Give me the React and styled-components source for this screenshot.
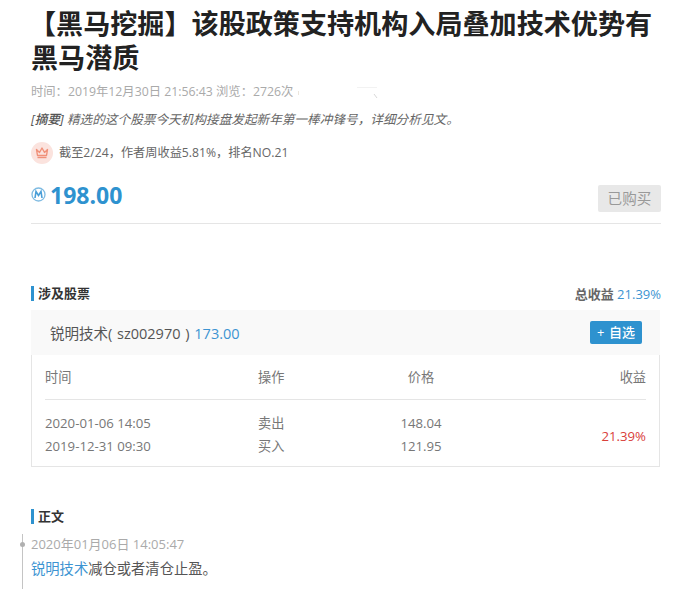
import styled, { createGlobalStyle } from "styled-components";

const GlobalStyle = createGlobalStyle`
  html, body {
    margin: 0;
    padding: 0;
    background: #fff;
    overflow: hidden;
  }
  body {
    font-family: "Open Sans", "Noto Sans CJK SC", sans-serif;
    color: #555;
  }
`;

const Page = styled.div`
  width: 630px;
  height: 589px;
  padding-left: 31px;
  overflow: hidden;
`;

const Title = styled.h1`
  margin: 0;
  padding-top: 7px;
  font-size: 27.1px;
  line-height: 34px;
  font-weight: 700;
  color: #222;
  text-indent: -2px;
`;

const Meta = styled.div`
  display: flex;
  align-items: center;
  margin-top: 7px;
  font-size: 12.3px;
  line-height: 20px;
  color: #aaa;
  white-space: pre;
  svg {
    margin-left: 2px;
  }
`;

const Summary = styled.p`
  margin: 7px 0 0;
  font-size: 12.65px;
  line-height: 20px;
  font-style: italic;
  color: #666;
  b {
    font-weight: 500;
    color: #555;
  }
`;

const RankRow = styled.div`
  display: flex;
  align-items: center;
  gap: 6px;
  margin-top: 13px;
  font-size: 12.2px;
  line-height: 22px;
  color: #666;
`;

const RankBadge = styled.span`
  display: flex;
  align-items: center;
  justify-content: center;
  width: 22px;
  height: 22px;
  border-radius: 50%;
  background: #fbe3de;
`;

const PriceRow = styled.div`
  display: flex;
  align-items: center;
  justify-content: space-between;
  margin-top: 21px;
  padding-bottom: 11px;
  height: 27px;
  border-bottom: 1px solid #e5e5e5;
`;

const Price = styled.div`
  display: flex;
  align-items: center;
  gap: 4px;
  margin-top: -8px;
  font-size: 23px;
  font-weight: 700;
  color: #2e92cf;
`;

const BoughtButton = styled.span`
  width: 63px;
  height: 27px;
  border-radius: 2px;
  background: #e8e8e8;
  color: #999;
  font-size: 14.6px;
  line-height: 27px;
  text-align: center;
`;

const SectionHead = styled.div`
  display: flex;
  align-items: center;
  justify-content: space-between;
  height: 16px;
  margin-top: ${(p) => p.$top}px;
`;

const SectionTitle = styled.div`
  border-left: 3px solid #2e92cf;
  padding-left: 4px;
  font-size: 13px;
  line-height: 15px;
  font-weight: 700;
  color: #333;
`;

const TotalGain = styled.div`
  font-size: 13px;
  color: #666;
  b {
    font-weight: 700;
  }
  span {
    color: #3d94d2;
  }
`;

const StockBar = styled.div`
  display: flex;
  align-items: center;
  justify-content: space-between;
  width: 629px;
  height: 45px;
  margin-top: 9px;
  padding: 0 18px 0 19px;
  box-sizing: border-box;
  background: #f9f9f9;
  font-size: 14.5px;
  word-spacing: 1px;
  color: #555;
`;

const StockPrice = styled.span`
  color: #3d94d2;
`;

const AddButton = styled.span`
  width: 52px;
  height: 23px;
  border-radius: 2px;
  background: #2e92cf;
  color: #fff;
  font-size: 13px;
  font-weight: 500;
  line-height: 23px;
  text-align: center;
`;

const TradeBox = styled.div`
  width: 629px;
  height: 112px;
  padding: 0 13px;
  box-sizing: border-box;
  border: 1px solid #e5e5e5;
  border-top: 0;
`;

const TradeGrid = styled.div`
  display: grid;
  grid-template-columns: 213px 100px 126px 1fr;
  font-size: 13.2px;
  line-height: 23px;
  color: #777;
`;

const HeadCell = styled.div`
  height: 44px;
  line-height: 44px;
  border-bottom: 1px solid #e5e5e5;
  margin-bottom: 12px;
  text-align: ${(p) => p.$align || "left"};
`;

const Cell = styled.div`
  text-align: ${(p) => p.$align || "left"};
`;

const GainCell = styled.div`
  grid-column: 4;
  grid-row: 2 / span 2;
  align-self: center;
  padding-top: 2px;
  text-align: right;
  color: #d9403a;
`;

const Timeline = styled.div`
  position: relative;
  margin-top: 10px;
  padding-bottom: 20px;
  &::before {
    content: "";
    position: absolute;
    left: -9px;
    top: 0;
    bottom: 0;
    width: 1px;
    background: #c4c4c4;
  }
  &::after {
    content: "";
    position: absolute;
    left: -11px;
    top: 8px;
    width: 5px;
    height: 5px;
    border-radius: 50%;
    background: #b0b0b0;
  }
`;

const PostTime = styled.div`
  font-size: 13px;
  line-height: 20px;
  color: #aaa;
`;

const PostBody = styled.div`
  margin-top: 5px;
  font-size: 14.3px;
  line-height: 20px;
  color: #555;
  span {
    color: #3d94d2;
  }
`;

const trades = [
  ["2020-01-06 14:05", "卖出", "148.04"],
  ["2019-12-31 09:30", "买入", "121.95"],
];

const App = () => {
  return (
    <Page>
      <GlobalStyle />
      <Title>【黑马挖掘】该股政策支持机构入局叠加技术优势有黑马潜质</Title>
      <Meta>
        时间：2019年12月30日 21:56:43 浏览：2726次
        <svg width="85" height="20" viewBox="0 0 85 20">
          <path d="M3.5 9V13" stroke="#ece6dc" fill="none" />
          <path d="M62 5.5H82" stroke="#f2f2f2" fill="none" />
          <path d="M79 12 82 16" stroke="#d8d8d8" fill="none" />
        </svg>
      </Meta>
      <Summary>
        <b>[摘要]</b> 精选的这个股票今天机构接盘发起新年第一棒冲锋号，详细分析见文。
      </Summary>
      <RankRow>
        <RankBadge>
          <svg width="14" height="12" viewBox="0 0 14 12">
            <path d="M1.5 2.5 4.5 5.5 7 1 9.5 5.5 12.5 2.5 11.5 8.5H2.5Z" fill="none" stroke="#f0917a" strokeWidth="1.4" strokeLinejoin="round" />
            <path d="M2.5 10.5H11.5" stroke="#f0917a" strokeWidth="1.4" />
          </svg>
        </RankBadge>
        截至2/24，作者周收益5.81%，排名NO.21
      </RankRow>
      <PriceRow>
        <Price>
          <svg width="15" height="15" viewBox="0 0 15 15">
            <circle cx="7.5" cy="7.5" r="6.5" fill="none" stroke="#7fbbe2" strokeWidth="1.3" />
            <path d="M4 11 5 4.5 7.5 8.5 10 4.5 11 11" fill="none" stroke="#4a9fd8" strokeWidth="1.6" />
          </svg>
          198.00
        </Price>
        <BoughtButton>已购买</BoughtButton>
      </PriceRow>
      <SectionHead $top={61}>
        <SectionTitle>涉及股票</SectionTitle>
        <TotalGain>
          <b>总收益</b> <span>21.39%</span>
        </TotalGain>
      </SectionHead>
      <StockBar>
        <div>
          锐明技术( sz002970 ) <StockPrice>173.00</StockPrice>
        </div>
        <AddButton>+ 自选</AddButton>
      </StockBar>
      <TradeBox>
        <TradeGrid>
          <HeadCell>时间</HeadCell>
          <HeadCell>操作</HeadCell>
          <HeadCell $align="center">价格</HeadCell>
          <HeadCell $align="right">收益</HeadCell>
          {trades.map((t) => [
            <Cell key={t[0]}>{t[0]}</Cell>,
            <Cell key={t[1]}>{t[1]}</Cell>,
            <Cell key={t[2]} $align="center">{t[2]}</Cell>,
          ])}
          <GainCell>21.39%</GainCell>
        </TradeGrid>
      </TradeBox>
      <SectionHead $top={41}>
        <SectionTitle>正文</SectionTitle>
      </SectionHead>
      <Timeline>
        <PostTime>2020年01月06日 14:05:47</PostTime>
        <PostBody>
          <span>锐明技术</span>减仓或者清仓止盈。
        </PostBody>
      </Timeline>
    </Page>
  );
};

export default App;
